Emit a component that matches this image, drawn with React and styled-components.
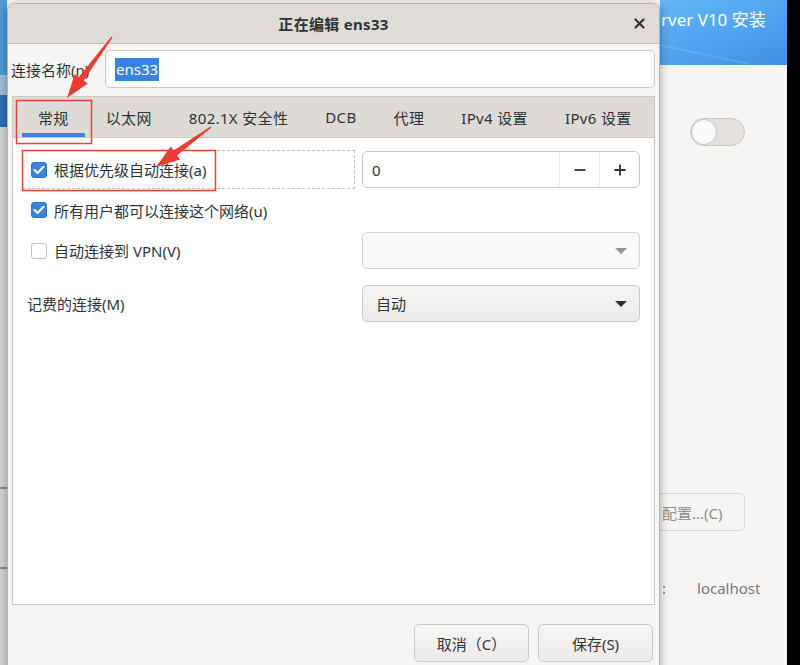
import React from "react";
import styled, { createGlobalStyle } from "styled-components";

const GlobalStyle = createGlobalStyle`
  html, body { margin: 0; padding: 0; overflow: hidden; background: #f6f5f4; }
  body { font-family: "Noto Sans", "Noto Sans CJK SC", sans-serif; color: #2e3436; }
  * { box-sizing: border-box; }
`;

const Desktop = styled.div`
  position: relative;
  width: 800px;
  height: 665px;
  overflow: hidden;
  display: flex;
  background: #f6f5f4;
`;

// left edge of the installer window behind the dialog
const LeftStrip = styled.div`
  width: 7px;
  flex: none;
  display: flex;
  flex-direction: column;
`;
const Segment = styled.div`
  height: ${(p) => p.h}px;
  flex: ${(p) => (p.grow ? 1 : "none")};
  background: ${(p) => p.bg};
  border-bottom: ${(p) => (p.line ? "2px solid #8c8c8c" : "none")};
`;

const Dialog = styled.div`
  position: relative;
  z-index: 1;
  width: 653px;
  flex: none;
  height: 680px;
  margin-top: 3px;
  background: #f6f5f4;
  border: 1px solid #b9b4af;
  border-radius: 8px 8px 0 0;
  box-shadow: 0 2px 10px rgba(0, 0, 0, 0.35);
  display: flex;
  flex-direction: column;
`;

const TitleBar = styled.div`
  height: 40px;
  background: #dfdcd8;
  border-bottom: 1px solid #c3beb9;
  border-radius: 7px 7px 0 0;
  display: grid;
  grid-template-columns: 1fr auto 1fr;
  align-items: center;
`;
const Title = styled.div`
  grid-column: 2;
  font-size: 15px;
  font-weight: 700;
  letter-spacing: 0.3px;
  color: #2e3436;
`;
const CloseButton = styled.div`
  justify-self: end;
  margin-right: 14px;
  display: flex;
  align-items: center;
`;

const Body = styled.div`
  padding: 6px 4px 0 3px;
  display: flex;
  flex-direction: column;
`;

const NameRow = styled.div`
  display: grid;
  grid-template-columns: 94px 1fr;
  align-items: center;
`;
const Label = styled.span`
  font-size: 15px;
  color: #2e3436;
  white-space: nowrap;
`;
const TextInput = styled.div`
  height: 38px;
  background: #fff;
  border: 1px solid #cdc7c2;
  border-radius: 5px;
  display: flex;
  align-items: center;
  padding-left: 9px;
  font-size: 15px;
`;
const Selected = styled.span`
  background: #3584e4;
  color: #fff;
  padding: 1px 1px 2px;
`;

const Notebook = styled.div`
  margin: 8px 0 0 1px;
  height: 509px;
  border: 1px solid #cdc7c2;
  display: flex;
  flex-direction: column;
`;
const TabBar = styled.div`
  height: 41px;
  flex: none;
  background: #dedad6;
  border-bottom: 1px solid #cdc7c2;
  display: flex;
  padding-left: 9px;
  gap: 5px;
`;
const Tab = styled.div`
  position: relative;
  padding: 0 16px;
  display: flex;
  align-items: center;
  font-size: 15px;
  letter-spacing: 0.35px;
  color: #2e3436;
  white-space: nowrap;
  &::after {
    content: "";
    display: ${(p) => (p.active ? "block" : "none")};
    position: absolute;
    left: 0;
    right: 0;
    bottom: 0;
    height: 4px;
    background: #3584e4;
  }
`;

const Page = styled.div`
  flex: 1;
  background: #fff;
  padding: 12px 14px 0 9px;
  display: grid;
  grid-template-columns: 333px 1fr;
  grid-template-rows: 39px 42px 39px 53px;
  column-gap: 7px;
  align-content: start;
`;
const Cell = styled.div`
  display: flex;
  align-items: center;
  padding-top: ${(p) => p.pt || 0}px;
  padding-left: ${(p) => p.pl || 0}px;
`;
const FocusBox = styled(Cell)`
  border: 1px dashed #c4c0bc;
  padding-left: 8px;
`;
const CheckRow = styled.div`
  display: flex;
  align-items: center;
  gap: 7px;
  font-size: 15px;
`;
const Box = styled.span`
  width: 16px;
  height: 16px;
  border-radius: 3px;
  flex: none;
  display: flex;
  align-items: center;
  justify-content: center;
  background: ${(p) => (p.checked ? "#3584e4" : "#fff")};
  border: 1px solid ${(p) => (p.checked ? "#2a76d0" : "#c4bfba")};
`;

const Spin = styled.div`
  width: 100%;
  height: 37px;
  border: 1px solid #cdc7c2;
  border-radius: 5px;
  background: #fff;
  display: grid;
  grid-template-columns: 1fr 40px 40px;
  font-size: 15px;
`;
const SpinValue = styled.div`
  display: flex;
  align-items: center;
  padding-left: 9px;
`;
const SpinButton = styled.div`
  border-left: 1px solid #ededeb;
  display: flex;
  align-items: center;
  justify-content: center;
`;

const Combo = styled.div`
  width: 100%;
  height: 37px;
  border: 1px solid ${(p) => (p.disabled ? "#d8d4d0" : "#cdc7c2")};
  border-radius: 5px;
  background: ${(p) =>
    p.disabled ? "#faf9f8" : "linear-gradient(#f6f5f4, #edebe9)"};
  display: flex;
  align-items: center;
  justify-content: space-between;
  padding: 0 12px 0 13px;
  font-size: 15px;
  color: #2e3436;
`;

const ButtonRow = styled.div`
  margin-top: 19px;
  display: flex;
  justify-content: flex-end;
  gap: 9px;
  padding-right: 2px;
`;
const Button = styled.div`
  width: 115px;
  height: 38px;
  border: 1px solid #cdc7c2;
  border-radius: 5px;
  background: linear-gradient(#f7f6f5, #edebe9);
  display: flex;
  align-items: center;
  justify-content: center;
  font-size: 15px;
  color: #2e3436;
`;

// the installer window on the right
const Installer = styled.div`
  width: 127px;
  flex: none;
  display: flex;
  flex-direction: column;
  background: #f6f5f4;
`;
const InstallerHeader = styled.div`
  height: 65px;
  background: linear-gradient(160deg, #62b5f7 0%, #4fa3ee 55%, #3f90e2 100%);
  color: #fff;
  font-size: 17px;
  padding: 6px 0 0 1px;
  white-space: nowrap;
  overflow: hidden;
  position: relative;
`;
const Streak = styled.div`
  position: absolute;
  left: 0;
  top: 44px;
  width: 90px;
  height: 2px;
  background: rgba(255, 255, 255, 0.12);
  transform: rotate(12deg);
  transform-origin: left;
`;
const Toggle = styled.div`
  margin: 53px 0 0 30px;
  width: 55px;
  height: 28px;
  border-radius: 14px;
  background: #e3e0dd;
  border: 1px solid #cdc7c2;
  display: flex;
  align-items: center;
`;
const Knob = styled.div`
  width: 26px;
  height: 26px;
  border-radius: 50%;
  background: #fafafa;
  border: 1px solid #c9c4bf;
`;
const ConfigButton = styled.div`
  margin-top: 347px;
  width: 85px;
  height: 38px;
  border: 1px solid #d9d5d1;
  border-left: none;
  border-radius: 0 5px 5px 0;
  display: flex;
  align-items: center;
  padding-left: 2px;
  font-size: 15px;
  color: #8b8e8f;
  white-space: nowrap;
`;
const HostRow = styled.div`
  margin-top: 47px;
  display: flex;
  gap: 31px;
  font-size: 15px;
  color: #77797a;
  padding-left: 2px;
`;
const BlackStrip = styled.div`
  width: 13px;
  flex: none;
  background: #000;
`;

const Overlay = styled.svg`
  position: absolute;
  inset: 0;
  z-index: 5;
  pointer-events: none;
`;

function arrowPoints(tx, ty, px, py) {
  const dx = px - tx;
  const dy = py - ty;
  const len = Math.hypot(dx, dy);
  const ux = dx / len;
  const uy = dy / len;
  const nx = -uy;
  const ny = ux;
  const L = 24;
  const W = 8;
  const w0 = 0.8;
  const w1 = 3;
  const bx = px - ux * L;
  const by = py - uy * L;
  const pts = [
    [tx + nx * w0, ty + ny * w0],
    [bx + nx * w1, by + ny * w1],
    [bx + nx * W, by + ny * W],
    [px, py],
    [bx - nx * W, by - ny * W],
    [bx - nx * w1, by - ny * w1],
    [tx - nx * w0, ty - ny * w0],
  ];
  return pts.map((p) => p.map((v) => v.toFixed(1)).join(",")).join(" ");
}

const Check = () => (
  <svg width="12" height="10" viewBox="0 0 12 10">
    <polyline
      points="1.5,5 4.6,8 10.5,1.8"
      fill="none"
      stroke="#fff"
      strokeWidth="2.2"
      strokeLinecap="round"
      strokeLinejoin="round"
    />
  </svg>
);

const Arrow = ({ color }) => (
  <svg width="12" height="8" viewBox="0 0 12 8">
    <polygon points="0,1 12,1 6,7" fill={color} />
  </svg>
);

const tabs = ["常规", "以太网", "802.1X 安全性", "DCB", "代理", "IPv4 设置", "IPv6 设置"];

export default function App() {
  return (
    <>
      <GlobalStyle />
      <Desktop>
        <LeftStrip>
          <Segment h={75} bg="#4c9bd7" />
          <Segment h={20} bg="#9dbfd8" />
          <Segment h={32} bg="#2f6db5" />
          <Segment h={362} bg="#d6d6d6" line />
          <Segment h={80} bg="#d3d3d3" line />
          <Segment grow bg="#d6d6d6" />
        </LeftStrip>

        <Dialog>
          <TitleBar>
            <Title>正在编辑 ens33</Title>
            <CloseButton>
              <svg width="11" height="11" viewBox="0 0 11 11">
                <path d="M1.5 1.5 L9.5 9.5 M9.5 1.5 L1.5 9.5" stroke="#2e3436" strokeWidth="2.2" strokeLinecap="round" />
              </svg>
            </CloseButton>
          </TitleBar>

          <Body>
            <NameRow>
              <Label>连接名称(n)</Label>
              <TextInput>
                <Selected>ens33</Selected>
              </TextInput>
            </NameRow>

            <Notebook>
              <TabBar>
                {tabs.map((t, i) => (
                  <Tab key={t} active={i === 0}>
                    {t}
                  </Tab>
                ))}
              </TabBar>
              <Page>
                <FocusBox>
                  <CheckRow>
                    <Box checked>
                      <Check />
                    </Box>
                    根据优先级自动连接(a)
                  </CheckRow>
                </FocusBox>
                <Cell>
                  <Spin>
                    <SpinValue>0</SpinValue>
                    <SpinButton>
                      <svg width="12" height="12" viewBox="0 0 12 12">
                        <path d="M0.5 6 H11.5" stroke="#2e3436" strokeWidth="1.8" />
                      </svg>
                    </SpinButton>
                    <SpinButton>
                      <svg width="12" height="12" viewBox="0 0 12 12">
                        <path d="M0.5 6 H11.5 M6 0.5 V11.5" stroke="#2e3436" strokeWidth="1.8" />
                      </svg>
                    </SpinButton>
                  </Spin>
                </Cell>

                <Cell pl={9}>
                  <CheckRow>
                    <Box checked>
                      <Check />
                    </Box>
                    所有用户都可以连接这个网络(u)
                  </CheckRow>
                </Cell>
                <Cell />

                <Cell pl={9}>
                  <CheckRow>
                    <Box />
                    自动连接到 VPN(V)
                  </CheckRow>
                </Cell>
                <Cell>
                  <Combo disabled>
                    <span />
                    <Arrow color="#929595" />
                  </Combo>
                </Cell>

                <Cell pl={5} pt={14}>
                  <Label>记费的连接(M)</Label>
                </Cell>
                <Cell pt={14}>
                  <Combo>
                    <span>自动</span>
                    <Arrow color="#2e3436" />
                  </Combo>
                </Cell>
              </Page>
            </Notebook>

            <ButtonRow>
              <Button>取消（C）</Button>
              <Button>保存(S)</Button>
            </ButtonRow>
          </Body>
        </Dialog>

        <Installer>
          <InstallerHeader>
            rver V10 安装
            <Streak />
          </InstallerHeader>
          <Toggle>
            <Knob />
          </Toggle>
          <ConfigButton>配置...(C)</ConfigButton>
          <HostRow>
            <span>:</span>
            <span>localhost</span>
          </HostRow>
        </Installer>
        <BlackStrip />

        <Overlay width="800" height="665" viewBox="0 0 800 665">
          <rect x="16.5" y="100.5" width="75" height="43" fill="none" stroke="#e8403a" strokeWidth="1.5" />
          <rect x="22.5" y="150.5" width="193" height="40" fill="none" stroke="#e8403a" strokeWidth="1.5" />
          <polygon points={arrowPoints(112, 37, 67, 98)} fill="#ee3b33" />
          <polygon points={arrowPoints(211, 127, 156, 167)} fill="#ee3b33" />
        </Overlay>
      </Desktop>
    </>
  );
}
